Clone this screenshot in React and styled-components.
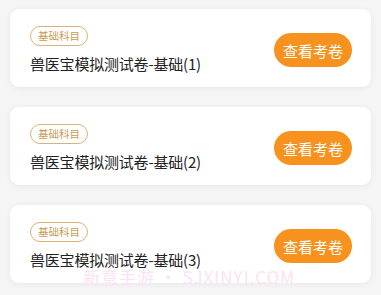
import React from 'react';
import styled, { createGlobalStyle } from 'styled-components';

const GlobalStyle = createGlobalStyle`
  html, body {
    margin: 0;
    padding: 0;
    background: #f5f5f5;
  }
  body {
    font-family: "Noto Sans CJK SC", "Noto Sans", sans-serif;
  }
`;

const Page = styled.div`
  position: relative;
  width: 381px;
  height: 295px;
  overflow: hidden;
  box-sizing: border-box;
  padding: 9px 10px 0 10px;
  display: flex;
  flex-direction: column;
  gap: 20px;
  background: #f5f5f5;
`;

const Card = styled.div`
  height: 78px;
  box-sizing: border-box;
  background: #fff;
  border-radius: 9px;
  box-shadow: 0 1px 6px rgba(0, 0, 0, 0.06);
  display: flex;
  align-items: center;
  justify-content: space-between;
  padding: 0 19px 0 20px;
`;

const Info = styled.div`
  display: flex;
  flex-direction: column;
  align-items: flex-start;
  gap: 7px;
  margin-top: 4px;
`;

const Tag = styled.span`
  height: 20px;
  box-sizing: border-box;
  padding: 0 7px;
  border: 1px solid #d9b27a;
  border-radius: 10px;
  color: #c99a55;
  font-size: 10.5px;
  line-height: 18px;
`;

const Title = styled.div`
  color: #222;
  font-size: 15px;
  line-height: 22px;
  letter-spacing: -0.2px;
  font-family: "Noto Sans CJK SC", "Noto Sans", sans-serif;
`;

const ViewButton = styled.button`
  width: 78px;
  height: 34px;
  border: none;
  border-radius: 17px;
  background: #f7921e;
  color: #fff;
  font-size: 15px;
  font-family: "Noto Sans CJK SC", "Noto Sans", sans-serif;
  padding: 0;
  margin-top: 4px;
  cursor: pointer;
`;

const Watermark = styled.div`
  position: absolute;
  left: 83px;
  top: 264px;
  color: #fbe3f3;
  font-size: 17px;
  letter-spacing: 1px;
  white-space: nowrap;
  font-family: "Noto Sans CJK SC", "Noto Sans", sans-serif;
  pointer-events: none;
`;

const papers = [1, 2, 3];

const App = () => {
  return (
    <Page>
      <GlobalStyle />
      {papers.map((n) => (
        <Card key={n}>
          <Info>
            <Tag>基础科目</Tag>
            <Title>兽医宝模拟测试卷-基础({n})</Title>
          </Info>
          <ViewButton>查看考卷</ViewButton>
        </Card>
      ))}
      <Watermark>新意手游 • SJXINYI.COM</Watermark>
    </Page>
  );
};

export default App;
